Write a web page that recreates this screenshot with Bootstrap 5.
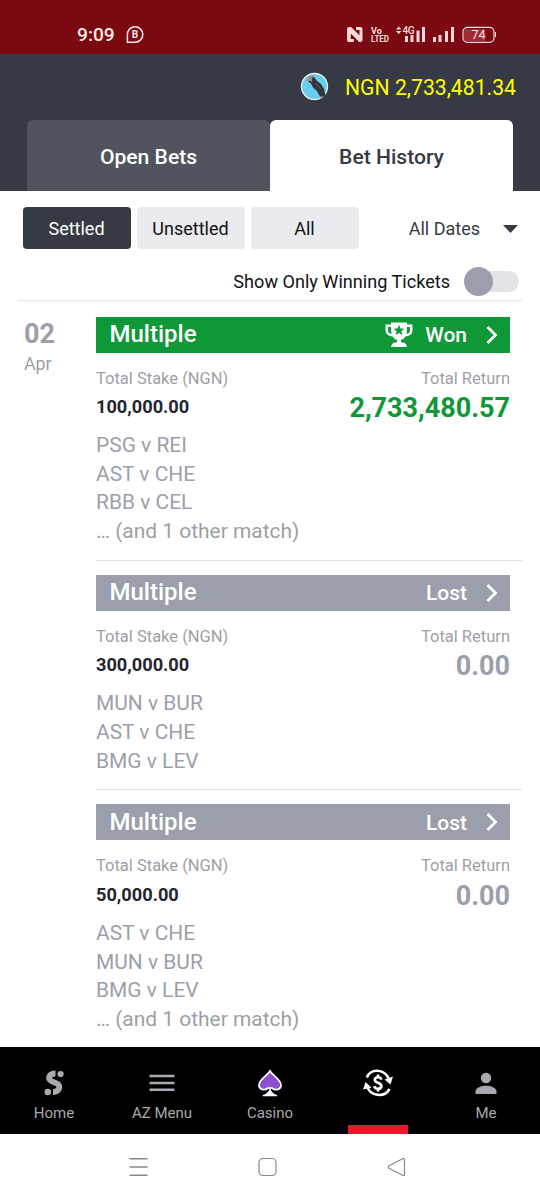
<!DOCTYPE html>
<html lang="en">
<head>
<meta charset="utf-8">
<meta name="viewport" content="width=device-width, initial-scale=1">
<title>Bet History</title>
<link href="https://cdn.jsdelivr.net/npm/bootstrap@5.3.0/dist/css/bootstrap.min.css" rel="stylesheet">
<style>
  :root { --ink:#353a45; --muted-ink:#9b9fab; --win:#0f9837; }
  body { font-family: Roboto, "Liberation Sans", sans-serif; width:540px; height:1200px; overflow:hidden; line-height:1; color:#111; background:#fff; }
  svg { display:block; flex:none; }
  .status { height:53.5px; background:#7a0911; color:#ffe9e6; padding:15px 0 0 77px; }
  .clock { font-size:19.2px; font-weight:500; width:38px; padding-top:10px; }
  .top-area { height:137.5px; background:var(--ink); padding-top:18.5px; }
  .balance { font-size:21.2px; color:#ffff00; padding-right:24px; gap:16px; }
  .balance span { padding-top:2px; }
  .bet-tabs { height:71.5px; margin:auto 27px 0; }
  .bet-tabs .nav-link { border-radius:6px 6px 0 0; background:#51545f; color:#fff; font-size:21.1px; line-height:1; font-weight:500; padding:3px 0 0; display:flex; align-items:center; justify-content:center; }
  .bet-tabs .nav-link.active { background:#fff; color:var(--ink); }
  .filters { padding:15.5px 22px 0 22.5px; height:58.5px; gap:6px; }
  .filters .btn { width:108px; height:42.5px; border:0; border-radius:4px; padding:2px 0 0; font-size:18px; line-height:1; background:#eaebee; color:#111; }
  .filters .btn.active { background:var(--ink); color:#fff; }
  .dates { font-size:18px; color:var(--ink); padding-top:2px; gap:23px; }
  .winning { height:51.5px; margin:0 18px; padding:13px 3px 0 0; border-bottom:1px solid #e3e4e7; font-size:18.1px; gap:17px; }
  .winning-text { padding-top:2px; }
  .switch-track { width:52px; height:21px; border-radius:11px; background:#e3e4e8; }
  .switch-knob { width:29px; height:29px; border-radius:50%; background:#9b9fab; left:-3px; }
  .day { width:78px; padding:20px 0 0 6px; color:var(--muted-ink); }
  .day-num { font-size:27px; font-weight:700; }
  .day-month { font-size:17.8px; margin-top:7px; }
  .history { margin:0 18px; height:746px; }
  .ticket { padding:15.5px 12px 14px 0; }
  .ticket + .ticket { border-top:1px solid #e3e4e7; padding-top:14px; }
  .bar { height:36px; background:var(--muted-ink); color:#fff; padding:0 9px 0 13.5px; font-weight:500; }
  .bar.won { background:var(--win); }
  .bar-kind { font-size:24px; padding-bottom:1px; }
  .bar-state { font-size:21px; padding-top:2px; }
  .labels { font-size:16.5px; color:var(--muted-ink); padding-top:18px; height:40px; }
  .amounts { height:29px; }
  .stake { font-size:18.2px; font-weight:700; color:#23262e; padding-top:1px; }
  .total { font-size:27px; font-weight:700; color:var(--muted-ink); padding-top:3px; }
  .total.won { color:var(--win); }
  .matches { font-size:20.95px; line-height:28.55px; color:var(--muted-ink); padding-top:9.9px; }
  .app-nav { height:87px; background:#000; color:#a9a9b1; font-size:15px; }
  .app-nav .nav-link { color:inherit; padding:21px 0 0; gap:8px; width:108px; line-height:1; display:flex; flex-direction:column; align-items:center; }
  .app-nav .marker { width:60px; height:9px; background:#e8192b; }
  .sys { height:66px; padding:0 134px 0 129px; }
</style>
</head>
<body class="d-flex flex-column">
  <header class="flex-shrink-0">
    <div class="status d-flex">
      <span class="clock">9:09</span>
      <svg width="390" height="38" viewBox="0 0 390 38">
        <path d="M12.400 27.200V20a7.700 7.700 0 1 1 7.700 7.200z" fill="none" stroke="#ffe9e6" stroke-width="1.500"/>
        <text x="16.700" y="23.400" font-size="10" font-weight="700" fill="#ffe9e6">B</text>
        <g fill="#ffd9d9">
          <path d="M234 12h2l8.500 8.300V15h-3.500v-3h4.500q2 0 2 2v11q0 2-2 2h-1.300l-8.400-8.600V24h3v3H234q-2 0-2-2V14q0-2 2-2z"/>
          <text x="256" y="18.500" font-size="9" font-weight="700">Vo</text>
          <text x="256" y="27.200" font-size="9" font-weight="700" textLength="18" lengthAdjust="spacingAndGlyphs">LTED</text>
          <path d="M281 14.500l2.700-3 2.700 3zM281 16l2.700 3 2.700-3z"/>
          <text x="287.500" y="19" font-size="10" font-weight="500" textLength="12">4G</text>
          <path d="M290 21h3v6h-3zM295.500 20h3v7h-3zM301.500 15.500h3v11.500h-3zM307 12h3v15h-3zM318 22h3v5h-3zM323.500 20h3v7h-3zM330 16h3v11h-3zM336 12h3v15h-3zM380 17h1v5h-1z"/>
        </g>
        <path d="M350.500 14h20v12h-20q-1.500 0-1.500-1.500v-9q0-1.500 1.500-1.500z" fill="#a02c38"/>
        <rect x="348" y="12.300" width="31" height="15" rx="4.500" fill="none" stroke="#ffd9d9" stroke-width="1.200"/>
        <text x="356.500" y="24.300" font-size="12.500" fill="#ffe0e0">74</text>
      </svg>
    </div>
    <div class="top-area d-flex flex-column">
      <div class="balance d-flex justify-content-end align-items-center">
        <svg width="29" height="29" viewBox="0 0 29 29">
          <circle cx="14.500" cy="14.500" r="13" fill="#68cdec" stroke="#e4f2f5" stroke-width="1.300"/>
          <path d="M10 5l4 0 3 4 4 3 3 5 1.500 6-3 2.500-3-1.500-2.500-5-4-3.500-2-4-3-2z" fill="#30343b"/>
          <path d="M5.500 8l4-4.500 4 1-2 2.500 1 3.500-2.500-2-2 1zM19 23l2.500 2 2-1.500-1.500 3-2 .5z" fill="#a99b9b"/>
          <path d="M9 6l4-2 1 2M15.500 11l5 6" fill="none" stroke="#64676c" stroke-width=".8"/>
        </svg>
        <span>NGN 2,733,481.34</span>
      </div>
      <nav class="bet-tabs nav nav-justified">
        <a class="nav-link" href="#">Open Bets</a>
        <a class="nav-link active" href="#">Bet History</a>
      </nav>
    </div>
  </header>

  <div class="filters d-flex flex-shrink-0">
    <button class="btn active">Settled</button>
    <button class="btn">Unsettled</button>
    <button class="btn">All</button>
    <div class="dates d-flex align-items-center ms-auto">
      <span>All Dates</span>
      <svg width="15" height="8" viewBox="0 0 15 8"><path d="M0 0h15L7.500 8z" fill="#353a45"/></svg>
    </div>
  </div>
  <div class="winning d-flex justify-content-end align-items-center flex-shrink-0">
    <span class="winning-text">Show Only Winning Tickets</span>
    <span class="switch-track d-flex align-items-center"><span class="switch-knob flex-shrink-0 position-relative"></span></span>
  </div>

  <main class="history d-flex flex-shrink-0 overflow-hidden">
    <div class="day flex-shrink-0"><div class="day-num">02</div><div class="day-month">Apr</div></div>
    <div class="flex-grow-1">
      <article class="ticket">
        <div class="bar won d-flex align-items-center">
          <span class="bar-kind me-auto">Multiple</span>
          <svg class="me-2" width="28" height="26" viewBox="0 0 28 26">
            <path d="M6 .5h16v2h5.500v6q0 5-7 6-2 3-4.500 3.500v2.500h2q3 0 4 4.500H6Q7 20.500 10 20.500h2V18q-2.500-.5-4.500-3.500-7-1-7-6v-6H6zm0 4.500H3v3.500q0 2.500 3.500 3.500Q6 8.500 6 5zm16 0q0 3.500-.5 7Q25 11 25 8.500V5z" fill="#fff"/>
            <path d="M14 2.800l1.500 3.600 3.900.3-3 2.500.9 3.800L14 10.900l-3.300 2.100.9-3.800-3-2.500 3.900-.3z" fill="#0f9837"/>
          </svg>
          <span class="bar-state ms-1">Won</span>
          <svg class="ms-3" width="18" height="20" viewBox="0 0 18 20"><path d="M4.500 2l8 8-8 8" fill="none" stroke="#fff" stroke-width="2.800"/></svg>
        </div>
        <div class="labels d-flex justify-content-between"><span>Total Stake (NGN)</span><span>Total Return</span></div>
        <div class="amounts d-flex justify-content-between align-items-center"><span class="stake">100,000.00</span><span class="total won">2,733,480.57</span></div>
        <div class="matches"><div>PSG v REI</div><div>AST v CHE</div><div>RBB v CEL</div><div>… (and 1 other match)</div></div>
      </article>
      <article class="ticket">
        <div class="bar d-flex align-items-center">
          <span class="bar-kind me-auto">Multiple</span>
          <span class="bar-state">Lost</span>
          <svg class="ms-3" width="18" height="20" viewBox="0 0 18 20"><path d="M4.500 2l8 8-8 8" fill="none" stroke="#fff" stroke-width="2.800"/></svg>
        </div>
        <div class="labels d-flex justify-content-between"><span>Total Stake (NGN)</span><span>Total Return</span></div>
        <div class="amounts d-flex justify-content-between align-items-center"><span class="stake">300,000.00</span><span class="total">0.00</span></div>
        <div class="matches"><div>MUN v BUR</div><div>AST v CHE</div><div>BMG v LEV</div></div>
      </article>
      <article class="ticket">
        <div class="bar d-flex align-items-center">
          <span class="bar-kind me-auto">Multiple</span>
          <span class="bar-state">Lost</span>
          <svg class="ms-3" width="18" height="20" viewBox="0 0 18 20"><path d="M4.500 2l8 8-8 8" fill="none" stroke="#fff" stroke-width="2.800"/></svg>
        </div>
        <div class="labels d-flex justify-content-between"><span>Total Stake (NGN)</span><span>Total Return</span></div>
        <div class="amounts d-flex justify-content-between align-items-center"><span class="stake">50,000.00</span><span class="total">0.00</span></div>
        <div class="matches"><div>AST v CHE</div><div>MUN v BUR</div><div>BMG v LEV</div><div>… (and 1 other match)</div></div>
      </article>
    </div>
  </main>

  <nav class="app-nav d-flex flex-shrink-0">
    <a class="nav-link" href="#">
      <svg width="30" height="30" viewBox="0 0 30 30">
        <g fill="#a9a9b1"><circle cx="21.600" cy="6" r="3.100"/><circle cx="8.800" cy="24" r="3.300"/></g>
        <path d="M16.500 5.500C10.500 5.500 9 9.500 11 12c2.200 2.800 7.500 2.500 9 5.500 1.200 3.500-1.500 6.500-6 6.500" fill="none" stroke="#a9a9b1" stroke-width="5.800"/>
      </svg>
      <span>Home</span>
    </a>
    <a class="nav-link" href="#">
      <svg width="30" height="30" viewBox="0 0 30 30"><path d="M2.500 8h25M2.500 15h25M2.500 21.800h25" stroke="#a9a9b1" stroke-width="2.600"/></svg>
      <span>AZ Menu</span>
    </a>
    <a class="nav-link" href="#">
      <svg width="30" height="30" viewBox="0 0 30 30">
        <path d="M15 3C12 8 4 11.500 4 17c0 5 5.500 6 9 3h4c3.500 3 9 2 9-3 0-5.500-8-9-11-14z" fill="#8b4fd0" stroke="#fff" stroke-width="1.700"/>
        <path d="M15 18.500c.6 4.500 3 7.500 7.200 8.500v1.200H7.800V27c4.200-1 6.600-4 7.200-8.500z" fill="#fff"/>
      </svg>
      <span>Casino</span>
    </a>
    <div class="nav-link justify-content-between">
      <svg width="32" height="30" viewBox="0 0 32 30">
        <g fill="none" stroke="#fff" stroke-width="2.600">
          <path d="M4.800 9.500C8.500.5 22 0 27 11M5 18c3 10.500 17.500 12 22.500 3"/>
          <path d="M19.300 11.600q-.4-2.400-3.300-2.400t-3.200 2.500q0 2 3.200 3.100t3.400 3.300q-.2 2.700-3.400 2.700t-3.500-2.700M16 6.500v3M16 20.500v3"/>
        </g>
        <path d="M22.500 11.500l8.500-3-2.500 8zM1 21.500L3.500 14l6 5.800z" fill="#fff"/>
      </svg>
      <span class="marker"></span>
    </div>
    <a class="nav-link" href="#">
      <svg width="30" height="30" viewBox="0 0 30 30"><circle cx="15" cy="10" r="5.200" fill="#a9a9b1"/><path d="M4.500 26v-2.500c0-4 6-5.800 10.500-5.800s10.500 1.800 10.500 5.800V26z" fill="#a9a9b1"/></svg>
      <span>Me</span>
    </a>
  </nav>
  <footer class="sys d-flex justify-content-between align-items-center flex-shrink-0">
    <svg width="19" height="20" viewBox="0 0 19 20"><path d="M.5 1.700h18M.5 10h18M.5 18.200h18" stroke="#888" stroke-width="1.400"/></svg>
    <svg width="19" height="20" viewBox="0 0 19 20"><rect x="1" y="1.500" width="17" height="17" rx="4" fill="none" stroke="#888" stroke-width="1.200"/></svg>
    <svg width="19" height="20" viewBox="0 0 19 20"><path d="M2 8.800L15.600 1.800q1.900-.8 1.900 1v14.400q0 1.800-1.900 1L2 11.200q-1.500-1.200 0-2.400z" fill="none" stroke="#888" stroke-width="1.200"/></svg>
  </footer>
</body>
</html>
